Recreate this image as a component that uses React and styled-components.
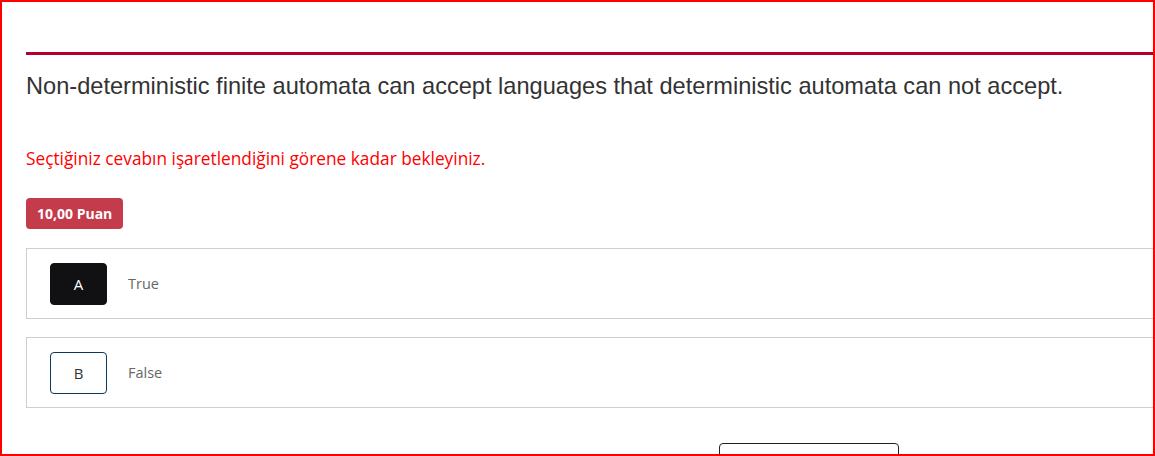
import styled, { createGlobalStyle } from 'styled-components';

const GlobalStyle = createGlobalStyle`
    body {
        margin: 0;
        background: #FFFFFF;
    }
    * {
        box-sizing: border-box;
    }
`;

const options = [
    { letter: 'A', text: 'True', selected: true },
    { letter: 'B', text: 'False', selected: false },
];

export default function App() {
    return (
        <>
            <GlobalStyle />
            <Frame>
                <QuestionBox>
                    <Divider />
                    <QuestionText>
                        Non-deterministic finite automata can accept languages that deterministic automata can not accept.
                    </QuestionText>
                    <Warning>Seçtiğiniz cevabın işaretlendiğini görene kadar bekleyiniz.</Warning>
                    <PointBadge>10,00 Puan</PointBadge>
                    <OptionList>
                        {options.map(option => (
                            <Option key={option.letter}>
                                <LetterBox selected={option.selected}>{option.letter}</LetterBox>
                                <OptionText>{option.text}</OptionText>
                            </Option>
                        ))}
                    </OptionList>
                    <Footer>
                        <NextButton />
                    </Footer>
                </QuestionBox>
            </Frame>
        </>
    );
}

const Frame = styled.div`
    width: 1155px;
    height: 456px;
    border: 2px solid #FF0000;
    overflow: hidden;
`;

const QuestionBox = styled.div`
    width: 1566px;
    margin-left: 24px;
    padding-top: 50px;
    display: flex;
    flex-direction: column;
`;

const Divider = styled.div`
    width: 100%;
    height: 3px;
    background: #B0002E;
`;

const QuestionText = styled.p`
    margin: 17px 0 0 0;
    font-family: "Liberation Sans", Arial, sans-serif;
    font-size: 23.6px;
    line-height: 1.2;
    color: #333333;
`;

const Warning = styled.p`
    margin: 47px 0 0 0;
    font-family: "Open Sans", "Noto Sans", sans-serif;
    font-size: 17.3px;
    line-height: 24px;
    color: #FF0000;
`;

const PointBadge = styled.span`
    align-self: flex-start;
    margin-top: 27px;
    height: 31px;
    padding: 0 11px;
    display: flex;
    align-items: center;
    background: #C43B4B;
    border-radius: 4px;
    font-family: "Open Sans", "Noto Sans", sans-serif;
    font-weight: 700;
    font-size: 14px;
    color: #FFFFFF;
`;

const OptionList = styled.div`
    margin-top: 19px;
    display: flex;
    flex-direction: column;
    gap: 18px;
`;

const Option = styled.div`
    width: 100%;
    height: 71px;
    display: flex;
    align-items: center;
    padding: 0 23px;
    border: 1px solid #CFCFCF;
    background: #FFFFFF;
`;

const LetterBox = styled.div`
    width: 57px;
    height: 42px;
    display: flex;
    justify-content: center;
    align-items: center;
    border-radius: 4px;
    background: ${props => props.selected ? "#111113" : "#FFFFFF"};
    border: 1px solid ${props => props.selected ? "#111113" : "#0B3A5B"};
    font-family: "Open Sans", "Noto Sans", sans-serif;
    font-size: 15px;
    color: ${props => props.selected ? "#FFFFFF" : "#333333"};
`;

const OptionText = styled.span`
    margin-left: 21px;
    font-family: "Open Sans", "Noto Sans", sans-serif;
    font-size: 14.5px;
    color: #666666;
`;

const Footer = styled.div`
    margin-top: 35px;
    display: flex;
    justify-content: center;
`;

const NextButton = styled.button`
    width: 180px;
    height: 40px;
    background: #FFFFFF;
    border: 1px solid #222222;
    border-radius: 4px;
`;
